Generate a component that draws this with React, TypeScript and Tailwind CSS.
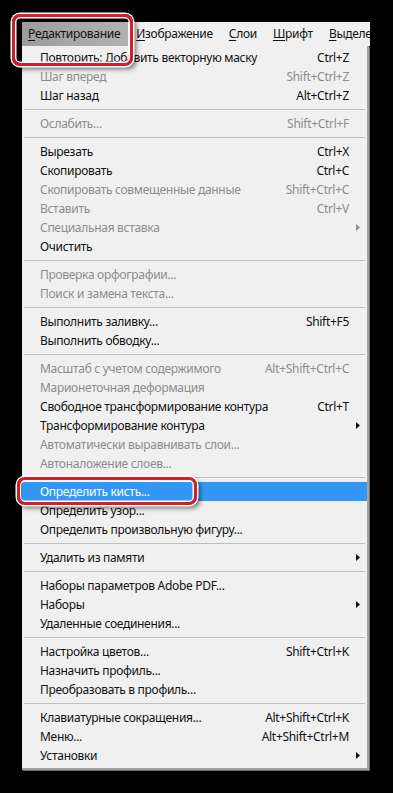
type Item = { label: string; keys?: string; off?: boolean; sub?: boolean; hot?: boolean } | "sep";

const menu: Item[] = [
  { label: "Повторить: Добавить векторную маску", keys: "Ctrl+Z" },
  { label: "Шаг вперед", keys: "Shift+Ctrl+Z", off: true },
  { label: "Шаг назад", keys: "Alt+Ctrl+Z" },
  "sep",
  { label: "Ослабить...", keys: "Shift+Ctrl+F", off: true },
  "sep",
  { label: "Вырезать", keys: "Ctrl+X" },
  { label: "Скопировать", keys: "Ctrl+C" },
  { label: "Скопировать совмещенные данные", keys: "Shift+Ctrl+C", off: true },
  { label: "Вставить", keys: "Ctrl+V", off: true },
  { label: "Специальная вставка", off: true, sub: true },
  { label: "Очистить" },
  "sep",
  { label: "Проверка орфографии...", off: true },
  { label: "Поиск и замена текста...", off: true },
  "sep",
  { label: "Выполнить заливку...", keys: "Shift+F5" },
  { label: "Выполнить обводку..." },
  "sep",
  { label: "Масштаб с учетом содержимого", keys: "Alt+Shift+Ctrl+C", off: true },
  { label: "Марионеточная деформация", off: true },
  { label: "Свободное трансформирование контура", keys: "Ctrl+T" },
  { label: "Трансформирование контура", sub: true },
  { label: "Автоматически выравнивать слои...", off: true },
  { label: "Автоналожение слоев...", off: true },
  "sep",
  { label: "Определить кисть...", hot: true },
  { label: "Определить узор..." },
  { label: "Определить произвольную фигуру..." },
  "sep",
  { label: "Удалить из памяти", sub: true },
  "sep",
  { label: "Наборы параметров Adobe PDF..." },
  { label: "Наборы", sub: true },
  { label: "Удаленные соединения..." },
  "sep",
  { label: "Настройка цветов...", keys: "Shift+Ctrl+K" },
  { label: "Назначить профиль..." },
  { label: "Преобразовать в профиль..." },
  "sep",
  { label: "Клавиатурные сокращения...", keys: "Alt+Shift+Ctrl+K" },
  { label: "Меню...", keys: "Alt+Shift+Ctrl+M" },
  { label: "Установки", sub: true },
];

const bar = [
  { first: "Р", rest: "едактирование", active: true },
  { first: "И", rest: "зображение" },
  { first: "С", rest: "лои" },
  { first: "Ш", rest: "рифт" },
  { first: "В", rest: "ыделе" },
];

function Arrow({ color }: { color: string }) {
  return (
    <svg width="4" height="7" viewBox="0 0 4 7">
      <path d="M0 0L4 3.5L0 7Z" fill={color} />
    </svg>
  );
}

const ring =
  "absolute rounded-[8px] border-[3px] border-[#d21f28] shadow-[0_0_0_1.5px_#ffffff,inset_0_0_0_1.5px_#ffffff,3px_3px_5px_rgba(0,0,0,0.55)]";

export default function App() {
  return (
    <div
      className="relative w-[393px] h-[793px] overflow-hidden bg-black text-[12px] tracking-[-0.3px] text-[#111]"
      style={{ fontFamily: '"Noto Sans", "Open Sans", sans-serif' }}
    >
      <div className="pt-[22px] pl-[22px]">
        <div className="flex h-[24px] w-[348px] overflow-hidden bg-[#f0f0f0]">
          {bar.map((b, i) => (
            <div
              key={i}
              className={
                "flex shrink-0 items-center whitespace-nowrap " +
                (b.active
                  ? "pl-[6px] pr-[8px] mr-[8px] bg-gradient-to-r from-[#9c9c9c] to-[#b2b2b2]"
                  : "mr-[16px]")
              }
            >
              <span className="underline underline-offset-2">{b.first}</span>
              {b.rest}
            </div>
          ))}
        </div>

        <div className="w-[347px] border-r-2 border-b-2 border-[#a3a3a3] bg-[#f0f0f0] pt-[2px] pb-[3px] shadow-[1px_1px_0_#6a6a6a]">
          {menu.map((m, i) =>
            m === "sep" ? (
              <div key={i} className="flex h-[9px] items-center px-[2px]">
                <div className="h-px w-full bg-[#bdbdbd]" />
              </div>
            ) : (
              <div
                key={i}
                className={
                  "flex h-[19px] items-center pl-[18px] " +
                  (m.hot ? "bg-[#3398f5] text-white" : m.off ? "text-[#8d8d8d]" : "")
                }
              >
                <span className="flex-1 whitespace-nowrap">{m.label}</span>
                <span className="whitespace-nowrap">{m.keys}</span>
                <span className="flex w-[18px] justify-center">
                  {m.sub && <Arrow color={m.off ? "#8d8d8d" : "#111"} />}
                </span>
              </div>
            )
          )}
        </div>
      </div>

      <div className={ring + " left-[12px] top-[14px] w-[121px] h-[52px]"} />
      <div className={ring + " left-[17px] top-[477px] w-[180px] h-[28px]"} />
    </div>
  );
}
